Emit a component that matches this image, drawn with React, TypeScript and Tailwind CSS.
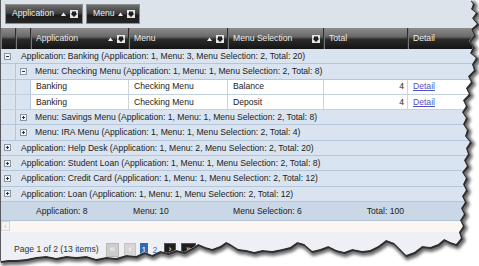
import React from "react";

type Row =
  | { kind: "app"; open: boolean; text: string }
  | { kind: "menu"; open: boolean; text: string }
  | { kind: "data"; app: string; menu: string; sel: string; total: number };

const rows: Row[] = [
  { kind: "app", open: true, text: "Application: Banking (Application: 1, Menu: 3, Menu Selection: 2, Total: 20)" },
  { kind: "menu", open: true, text: "Menu: Checking Menu (Application: 1, Menu: 1, Menu Selection: 2, Total: 8)" },
  { kind: "data", app: "Banking", menu: "Checking Menu", sel: "Balance", total: 4 },
  { kind: "data", app: "Banking", menu: "Checking Menu", sel: "Deposit", total: 4 },
  { kind: "menu", open: false, text: "Menu: Savings Menu (Application: 1, Menu: 1, Menu Selection: 2, Total: 8)" },
  { kind: "menu", open: false, text: "Menu: IRA Menu (Application: 1, Menu: 1, Menu Selection: 2, Total: 4)" },
  { kind: "app", open: false, text: "Application: Help Desk (Application: 1, Menu: 2, Menu Selection: 2, Total: 20)" },
  { kind: "app", open: false, text: "Application: Student Loan (Application: 1, Menu: 1, Menu Selection: 2, Total: 8)" },
  { kind: "app", open: false, text: "Application: Credit Card (Application: 1, Menu: 1, Menu Selection: 2, Total: 12)" },
  { kind: "app", open: false, text: "Application: Loan (Application: 1, Menu: 1, Menu Selection: 2, Total: 12)" },
];

// torn paper edge, right side then bottom
const edge =
  "470,0 473,4 471,9 476,13 472,18 477,24 471,29 474,35 469,41 473,47 470,53 476,58 472,64 474,70 468,76 471,82 466,88 469,94 463,100 466,106 462,112 466,118 463,124 467,130 465,136 470,142 466,148 468,154 464,160 467,166 462,172 466,178 463,184 466,190 462,196 465,202 461,208 464,214 460,220 463,226 459,232 461,238 456,244 " +
  "450,242 444,239 438,244 430,247 422,246 414,252 406,255 400,249 394,243 386,240 378,246 370,250 362,251 352,249 344,252 336,250 328,246 320,249 312,251 304,244 297,242 290,247 282,249 272,251 262,250 254,252 246,250 238,249 230,244 226,242 220,246 212,249 205,247 198,244 192,248 184,252 176,250 168,253 160,251 152,255 144,252 136,256 126,255 116,258 106,257 96,259 86,256 76,257 66,256 56,258 46,256 36,257 26,259 16,260 8,260 0,261";

const Toggle = ({ open }: { open: boolean }) => (
  <svg width="7" height="7" viewBox="0 0 7 7" className="shrink-0">
    <rect x="0.5" y="0.5" width="6" height="6" fill="#f3f6f9" stroke="#8b96a2" />
    <path d="M2 3.5H5" stroke="#333" />
    {!open && <path d="M3.5 2V5" stroke="#333" />}
  </svg>
);

const SortUp = () => (
  <svg width="5" height="4" viewBox="0 0 5 4" className="shrink-0">
    <path d="M0 4L2.5 0.5L5 4Z" fill="#f2f2f2" />
  </svg>
);

const FilterBox = () => (
  <svg width="8" height="8" viewBox="0 0 8 8" className="shrink-0">
    <rect width="8" height="8" fill="#e4e4e4" />
    <path d="M2 1.5H6V3.5H7.5L4 7L0.5 3.5H2Z" fill="#1e1e1e" />
  </svg>
);

const GroupButton = ({ label, w }: { label: string; w: string }) => (
  <div
    className={`flex h-[20px] ${w} items-center border border-[#8d8d8d] bg-[linear-gradient(#6e6e6e,#3a3a3a_50%,#1c1c1c_55%,#262626)] pl-[6px] pr-[4px] text-[#eeeeee]`}
  >
    <span className="flex-1">{label}</span>
    <span className="mr-[4px]">
      <SortUp />
    </span>
    <FilterBox />
  </div>
);

const Head = ({ w, label, sort, filter, last }: { w: string; label?: string; sort?: boolean; filter?: boolean; last?: boolean }) => (
  <div
    className={`flex h-full ${w} items-center ${last ? "" : "border-r border-[#2c2c2c]"} shadow-[inset_1px_0_0_#777777] pl-[5px] pr-[3px]`}
  >
    <span className="flex-1 truncate">{label}</span>
    {sort && (
      <span className="mr-[4px]">
        <SortUp />
      </span>
    )}
    {filter && <FilterBox />}
  </div>
);

export default function App() {
  return (
    <div className="relative h-[266px] w-[479px] overflow-hidden bg-white font-['Liberation_Sans',Arial,sans-serif] text-[8.6px] leading-none text-[#222]">
      <div className="flex flex-col border-l border-[#5a5a5a]">
        {/* group-by panel */}
        <div className="flex h-[28px] items-center gap-[3px] bg-[#dde3ea] pl-[4px] pb-[1px]">
          <GroupButton label="Application" w="w-[78px]" />
          <GroupButton label="Menu" w="w-[54px]" />
        </div>

        {/* header */}
        <div className="flex h-[21px] bg-[linear-gradient(#8c8c8c,#6a6a6a_40%,#2a2a2a_55%,#141414)] text-[#ececec]">
          <Head w="w-[15px]" />
          <Head w="w-[15px]" />
          <Head w="w-[98px]" label="Application" sort filter />
          <Head w="w-[99px]" label="Menu" sort filter />
          <Head w="w-[96px]" label="Menu Selection" filter />
          <Head w="w-[84px]" label="Total" />
          <Head w="flex-1" label="Detail" last />
        </div>

        {/* body */}
        {rows.map((r, i) => {
          if (r.kind === "app") {
            return (
              <div key={i} className="flex h-[15.3px] items-center border-b border-[#b4c6d9] bg-[#d9e4f0] pl-[3px]">
                <Toggle open={r.open} />
                <span className="ml-[10px] whitespace-nowrap">{r.text}</span>
              </div>
            );
          }
          if (r.kind === "menu") {
            return (
              <div key={i} className="flex h-[15.3px] items-center border-b border-[#b4c6d9] bg-[#d9e4f0]">
                <div className="h-full w-[15px] border-r border-[#b4c6d9]" />
                <span className="ml-[4px]">
                  <Toggle open={r.open} />
                </span>
                <span className="ml-[8px] whitespace-nowrap">{r.text}</span>
              </div>
            );
          }
          return (
            <div key={i} className="flex h-[15.3px] border-b border-[#c3d1e0] bg-white">
              <div className="h-full w-[15px] border-r border-[#b4c6d9] bg-[#d9e4f0]" />
              <div className="h-full w-[15px] border-r border-[#b4c6d9] bg-[#d9e4f0]" />
              <div className="flex w-[98px] items-center border-r border-[#c9d5e2] pl-[5px]">{r.app}</div>
              <div className="flex w-[99px] items-center border-r border-[#c9d5e2] pl-[5px]">{r.menu}</div>
              <div className="flex w-[96px] items-center border-r border-[#c9d5e2] pl-[5px]">{r.sel}</div>
              <div className="flex w-[84px] items-center justify-end border-r border-[#c9d5e2] pr-[3px]">{r.total}</div>
              <div className="flex flex-1 items-center pl-[5px]">
                <span className="text-[#5050c8] underline">Detail</span>
              </div>
            </div>
          );
        })}

        {/* footer aggregates */}
        <div className="flex h-[19px] items-center border-b border-[#b0c2d6] bg-[#c9d7e6]">
          <div className="w-[30px]" />
          <div className="w-[98px] pl-[5px]">Application: 8</div>
          <div className="w-[99px] pl-[4px]">Menu: 10</div>
          <div className="w-[96px] pl-[5px]">Menu Selection: 6</div>
          <div className="w-[84px] pr-[4px] text-right">Total: 100</div>
          <div className="flex-1" />
        </div>

        {/* horizontal scrollbar */}
        <div className="flex h-[11px] items-center bg-[#fbf6f2]">
          <div className="flex h-[10px] w-[9px] items-center justify-center border border-[#d6d6d6] bg-[#f4f4f4] text-[7px] text-[#b0b0b0]">
            ‹
          </div>
        </div>

        {/* pager */}
        <div className="flex h-[34px] items-start bg-[#eef0f6] pl-[13px] pt-[11px] text-[#333]">
          <span className="mt-[2px] w-[92px] whitespace-nowrap">Page 1 of 2 (13 items)</span>
          <div className="flex items-center">
            <div className="flex h-[14px] w-[13px] items-center justify-center border border-[#b7b7b7] bg-[#cdcdcd] text-[9px] text-white">«</div>
            <div className="ml-[5px] flex h-[14px] w-[12px] items-center justify-center border border-[#c4c4c4] bg-[#d6d6d6] text-[9px] text-white">‹</div>
            <div className="ml-[4px] flex h-[13px] w-[8px] items-center justify-center bg-[#2c6cb4] text-white">1</div>
            <div className="ml-[3px] flex h-[13px] w-[8px] items-center justify-center text-[#3a72c4]">2</div>
            <div className="ml-[5px] flex h-[14px] w-[12px] items-center justify-center border border-[#555] bg-[#1e1e1e] text-[9px] text-white">›</div>
            <div className="ml-[5px] flex h-[14px] w-[15px] items-center justify-center border border-[#555] bg-[#1e1e1e] text-[9px] text-white">»</div>
          </div>
        </div>
      </div>

      {/* torn paper edge overlay */}
      <svg width="479" height="266" viewBox="0 0 479 266" className="pointer-events-none absolute left-0 top-0">
        <defs>
          <clipPath id="outside">
            <path clipRule="evenodd" fillRule="evenodd" d={`M0 0H479V266H0Z M0 0 L${edge} Z`} />
          </clipPath>
          <filter id="blur" x="-10%" y="-10%" width="120%" height="120%">
            <feGaussianBlur stdDeviation="1.6" />
          </filter>
        </defs>
        <path fillRule="evenodd" fill="#ffffff" d={`M0 0H479V266H0Z M0 0 L${edge} Z`} />
        <g clipPath="url(#outside)">
          <polyline points={edge} fill="none" stroke="#6c6c6c" strokeWidth="6" filter="url(#blur)" transform="translate(1.5 2)" />
          <polyline points={edge} fill="none" stroke="#2e2e2e" strokeWidth="2" transform="translate(0.7 1)" />
        </g>
      </svg>
    </div>
  );
}
